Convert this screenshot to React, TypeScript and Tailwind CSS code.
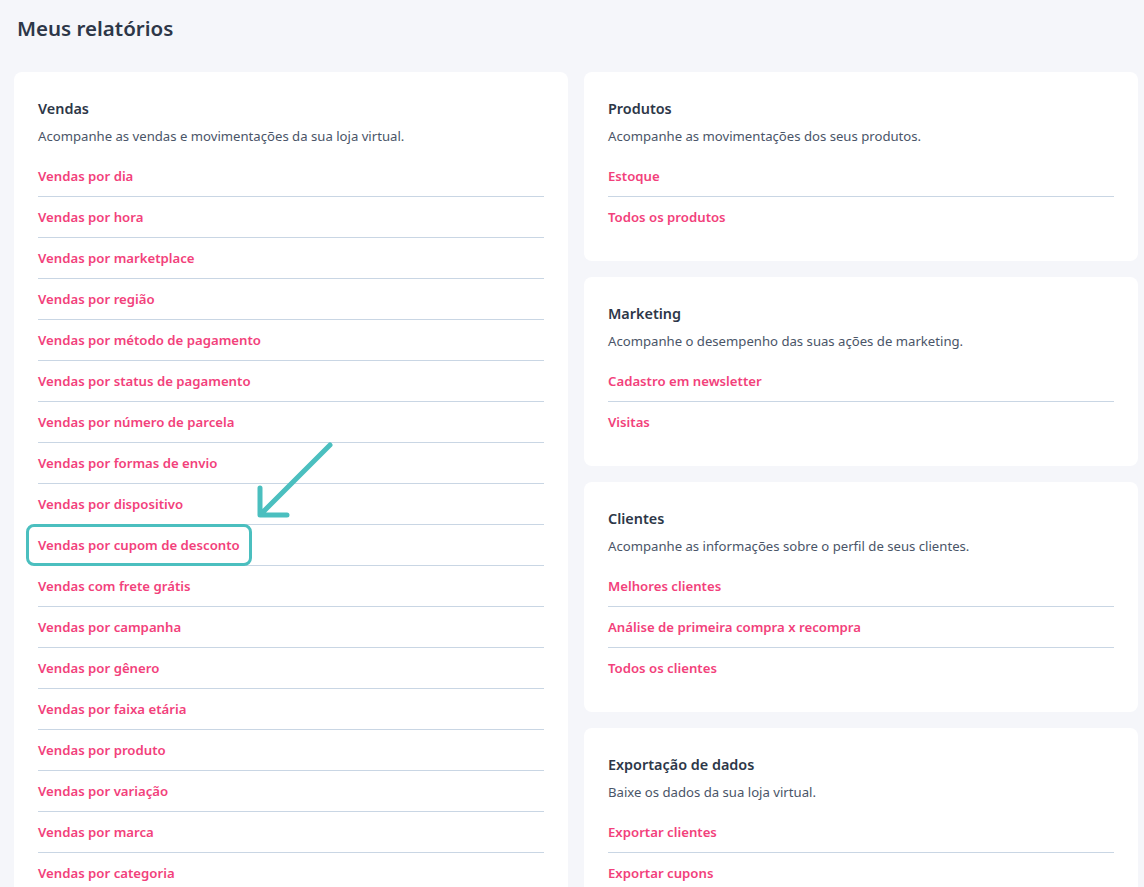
import React from "react";

interface Report {
  title: string;
  description: string;
  links: string[];
}

const vendas: Report = {
  title: "Vendas",
  description: "Acompanhe as vendas e movimentações da sua loja virtual.",
  links: [
    "Vendas por dia",
    "Vendas por hora",
    "Vendas por marketplace",
    "Vendas por região",
    "Vendas por método de pagamento",
    "Vendas por status de pagamento",
    "Vendas por número de parcela",
    "Vendas por formas de envio",
    "Vendas por dispositivo",
    "Vendas por cupom de desconto",
    "Vendas com frete grátis",
    "Vendas por campanha",
    "Vendas por gênero",
    "Vendas por faixa etária",
    "Vendas por produto",
    "Vendas por variação",
    "Vendas por marca",
    "Vendas por categoria",
  ],
};

const rightColumn: Report[] = [
  {
    title: "Produtos",
    description: "Acompanhe as movimentações dos seus produtos.",
    links: ["Estoque", "Todos os produtos"],
  },
  {
    title: "Marketing",
    description: "Acompanhe o desempenho das suas ações de marketing.",
    links: ["Cadastro em newsletter", "Visitas"],
  },
  {
    title: "Clientes",
    description: "Acompanhe as informações sobre o perfil de seus clientes.",
    links: ["Melhores clientes", "Análise de primeira compra x recompra", "Todos os clientes"],
  },
  {
    title: "Exportação de dados",
    description: "Baixe os dados da sua loja virtual.",
    links: ["Exportar clientes", "Exportar cupons"],
  },
];

const ReportCard: React.FC<{ report: Report; highlight?: string }> = ({ report, highlight }) => (
  <div className="relative bg-white rounded-lg p-6">
    <h2 className="pt-px text-[14.4px] leading-6 font-semibold text-[#2d3748]">{report.title}</h2>
    <p className="mt-[5px] text-[13.15px] leading-5 text-[#4a5568]">{report.description}</p>
    <ul className="mt-2.5">
      {report.links.map((link) => (
        <li
          key={link}
          className="relative h-[41px] border-b border-[#c9d6e4] last:border-b-0 last:h-10 flex items-center"
        >
          <a href="#" className="text-[13.2px] font-semibold text-[#f2417b] leading-5">
            {link}
          </a>
          {highlight === link && (
            <div className="absolute -left-3 -top-px w-[226px] h-[42px] border-[3px] border-[#4bbfbf] rounded-lg" />
          )}
        </li>
      ))}
    </ul>
    {highlight && (
      <svg className="absolute left-[222px] top-[368px]" width="100" height="80" viewBox="0 0 100 80" fill="none">
        <path
          d="M94 5 L27 72 M24 48 L24 75 L51 75"
          stroke="#4bbfbf"
          strokeWidth="5"
          strokeLinecap="round"
          strokeLinejoin="round"
        />
      </svg>
    )}
  </div>
);

export default function App() {
  return (
    <div
      className="bg-[#f5f6fa] px-[14px] pt-4 overflow-hidden h-[887px]"
      style={{ fontFamily: '"Noto Sans", "Open Sans", sans-serif' }}
    >
      <h1 className="ml-[3px] text-[20.5px] leading-6 font-semibold text-[#2d3748]">Meus relatórios</h1>
      <div className="mt-8 grid grid-cols-[554px_554px] gap-4 items-start">
        <ReportCard report={vendas} highlight="Vendas por cupom de desconto" />
        <div className="flex flex-col gap-4">
          {rightColumn.map((r) => (
            <ReportCard key={r.title} report={r} />
          ))}
        </div>
      </div>
    </div>
  );
}
